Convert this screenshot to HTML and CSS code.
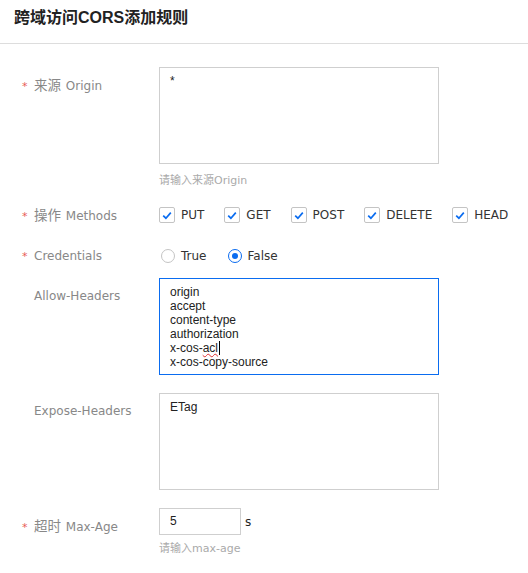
FILE: index.html
```html
<!DOCTYPE html>
<html lang="zh-CN">
<head>
<meta charset="utf-8">
<title>跨域访问CORS添加规则</title>
<link rel="stylesheet" href="styles.css">
</head>
<body>
<div class="header"><h1 class="title">跨域访问CORS添加规则</h1></div>
<div class="form">
  <div class="row row-origin">
    <div class="label"><span class="req">*</span><span class="cjk">来源</span> Origin</div>
    <div class="field">
      <div class="textarea">*</div>
      <div class="hint hint-origin">请输入来源Origin</div>
    </div>
  </div>

  <div class="row row-inline row-methods">
    <div class="label"><span class="req">*</span><span class="cjk">操作</span> Methods</div>
    <div class="field field-inline">
      <label class="check"><span class="box"><svg width="10" height="9" viewBox="0 0 10 9"><path d="M1.2 4.6 L3.9 7.2 L8.8 1.6" fill="none" stroke="#0a6cf0" stroke-width="1.7"/></svg></span>PUT</label>
      <label class="check"><span class="box"><svg width="10" height="9" viewBox="0 0 10 9"><path d="M1.2 4.6 L3.9 7.2 L8.8 1.6" fill="none" stroke="#0a6cf0" stroke-width="1.7"/></svg></span>GET</label>
      <label class="check"><span class="box"><svg width="10" height="9" viewBox="0 0 10 9"><path d="M1.2 4.6 L3.9 7.2 L8.8 1.6" fill="none" stroke="#0a6cf0" stroke-width="1.7"/></svg></span>POST</label>
      <label class="check"><span class="box"><svg width="10" height="9" viewBox="0 0 10 9"><path d="M1.2 4.6 L3.9 7.2 L8.8 1.6" fill="none" stroke="#0a6cf0" stroke-width="1.7"/></svg></span>DELETE</label>
      <label class="check"><span class="box"><svg width="10" height="9" viewBox="0 0 10 9"><path d="M1.2 4.6 L3.9 7.2 L8.8 1.6" fill="none" stroke="#0a6cf0" stroke-width="1.7"/></svg></span>HEAD</label>
    </div>
  </div>

  <div class="row row-inline row-cred">
    <div class="label"><span class="req">*</span>Credentials</div>
    <div class="field field-inline field-radio">
      <label class="radio"><span class="circle"></span>True</label>
      <label class="radio"><span class="circle checked"></span>False</label>
    </div>
  </div>

  <div class="row row-allow">
    <div class="label">Allow-Headers</div>
    <div class="field">
      <div class="textarea focus">origin<br>accept<br>content-type<br>authorization<br>x-cos-<span class="spell">acl</span><span class="caret"></span><br>x-cos-copy-source</div>
    </div>
  </div>

  <div class="row row-expose">
    <div class="label">Expose-Headers</div>
    <div class="field">
      <div class="textarea">ETag</div>
    </div>
  </div>

  <div class="row row-age">
    <div class="label"><span class="req">*</span><span class="cjk">超时</span> Max-Age</div>
    <div class="field">
      <div class="input-line"><div class="input">5</div><span class="unit">s</span></div>
      <div class="hint hint-age">请输入max-age</div>
    </div>
  </div>
</div>
</body>
</html>
```

FILE: styles.css
```css
html, body {
  margin: 0;
  padding: 0;
  background: #fff;
}

body {
  font-family: "DejaVu Sans", "Noto Sans CJK SC", sans-serif;
  font-size: 12px;
  color: #333;
}

.header {
  height: 44px;
  box-sizing: border-box;
  border-bottom: 1px solid #dddddd;
  padding: 8px 0 0 14px;
}

.title {
  margin: 0;
  font-size: 16px;
  line-height: 20px;
  font-weight: bold;
  color: #222;
  font-family: "Liberation Sans", "Noto Sans CJK SC", sans-serif;
}

.form {
  padding: 23px 0 0 22px;
}

.row {
  display: flex;
}

.label {
  width: 137px;
  flex: none;
  box-sizing: border-box;
  padding: 9px 0 0 12px;
  line-height: 18px;
  height: 27px;
  color: #888;
}

.cjk {
  font-size: 13.5px;
  margin-right: 1px;
}

.req {
  display: inline-block;
  width: 12px;
  margin-left: -12px;
  color: #e85a55;
  font-size: 11px;
}

.field {
  display: flex;
  flex-direction: column;
}

.row-origin { margin-bottom: 7px; }
.row-methods { margin-bottom: 5px; }
.row-cred { margin-bottom: 4px; }
.row-allow { margin-bottom: 18px; }
.row-expose { margin-bottom: 18px; }

.row-inline { height: 36px; }

.field-inline {
  flex-direction: row;
  align-items: center;
  height: 36px;
}

.textarea {
  width: 280px;
  height: 97px;
  box-sizing: border-box;
  border: 1px solid #cfcfcf;
  padding: 6px 10px;
  line-height: 14px;
  color: #222;
  background: #fff;
  font-family: "Liberation Sans", "Noto Sans CJK SC", sans-serif;
}

.textarea.focus {
  border-color: #0a6cf0;
}

.spell {
  text-decoration: underline wavy #e03030;
  text-decoration-thickness: 1px;
  text-underline-offset: 1px;
}

.caret {
  display: inline-block;
  width: 0;
  height: 14px;
  border-right: 1px solid #000;
  vertical-align: top;
  margin-left: 1px;
}

.hint {
  color: #aaa;
  font-size: 11px;
  line-height: 18px;
}

.hint-origin { margin-top: 8px; }
.hint-age { margin-top: 5px; }

.check {
  display: flex;
  align-items: center;
  margin-right: 20px;
  color: #333;
}

.box {
  width: 16px;
  height: 16px;
  box-sizing: border-box;
  border: 1px solid #c4c4c4;
  border-radius: 2px;
  margin-right: 6px;
  display: flex;
  align-items: center;
  justify-content: center;
}

.field-radio {
  padding-left: 2px;
}

.radio {
  display: flex;
  align-items: center;
  margin-right: 21px;
  color: #333;
}

.circle {
  width: 14px;
  height: 14px;
  box-sizing: border-box;
  border: 1px solid #c4c4c4;
  border-radius: 50%;
  margin-right: 6px;
  display: flex;
  align-items: center;
  justify-content: center;
}

.circle.checked {
  border-color: #0a6cf0;
}

.circle.checked::after {
  content: "";
  width: 6px;
  height: 6px;
  border-radius: 50%;
  background: #0a6cf0;
}

.input-line {
  display: flex;
  align-items: center;
}

.input {
  width: 82px;
  height: 27px;
  box-sizing: border-box;
  border: 1px solid #cfcfcf;
  padding: 0 10px;
  line-height: 25px;
  color: #222;
  font-family: "Liberation Sans", sans-serif;
}

.unit {
  margin-left: 4px;
  color: #222;
}
```
